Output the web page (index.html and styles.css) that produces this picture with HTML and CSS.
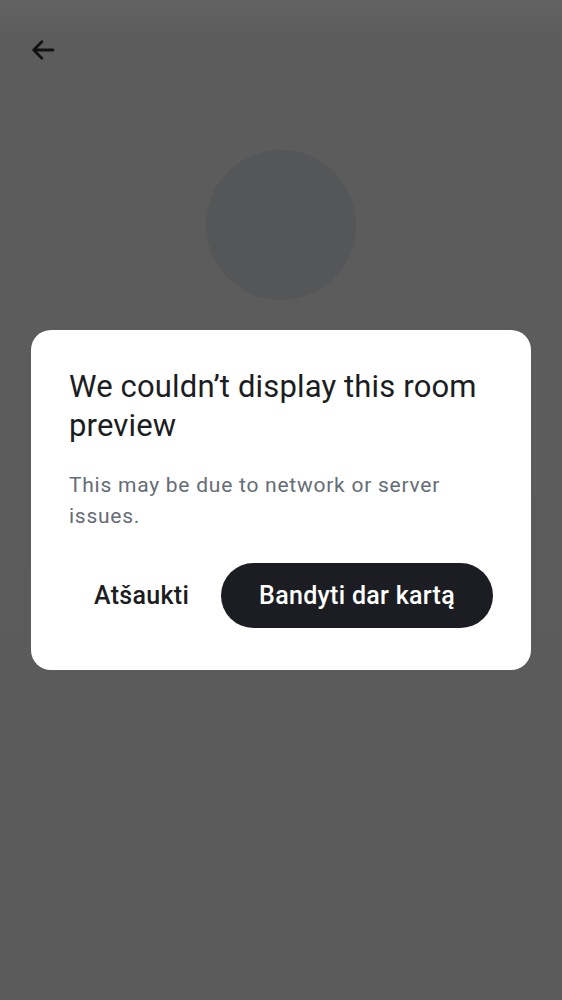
FILE: index.html
```html
<!DOCTYPE html>
<html lang="en">
<head>
<meta charset="utf-8">
<title>Room preview</title>
<link rel="stylesheet" href="styles.css">
</head>
<body>
<div class="screen">
  <header class="topbar">
    <button class="back" aria-label="Back">
      <svg width="28" height="28" viewBox="0 0 24 24"><path d="M20.5 12H4.5M11 5l-7 7 7 7" fill="none" stroke="#111214" stroke-width="2.4" stroke-linecap="round" stroke-linejoin="round"/></svg>
    </button>
  </header>
  <div class="avatar"></div>
</div>
<div class="overlay">
  <div class="dialog" role="dialog">
    <h1 class="title">We couldn’t display this room preview</h1>
    <p class="body">This may be due to network or server issues.</p>
    <div class="actions">
      <button class="btn text">Atšaukti</button>
      <button class="btn primary">Bandyti dar kartą</button>
    </div>
  </div>
</div>
</body>
</html>
```
FILE: styles.css
```css
html, body {
  margin: 0;
  padding: 0;
}
body {
  width: 562px;
  height: 1000px;
  overflow: hidden;
  background: linear-gradient(to bottom, #626262 0px, #5c5c5c 40px, #5b5b5b 1000px);
  font-family: Roboto, "Noto Sans", "Liberation Sans", sans-serif;
}
.screen {
  display: flex;
  flex-direction: column;
  align-items: center;
}
.topbar {
  align-self: stretch;
  height: 100px;
  display: flex;
  align-items: flex-start;
  padding: 36px 0 0 29px;
  box-sizing: border-box;
}
.back {
  background: none;
  border: 0;
  padding: 0;
  width: 28px;
  height: 28px;
  display: flex;
}
.avatar {
  margin-top: 50px;
  width: 150px;
  height: 150px;
  border-radius: 50%;
  background: #555657;
}
.overlay {
  position: fixed;
  inset: 0;
  display: flex;
  align-items: center;
  justify-content: center;
}
.dialog {
  width: 500px;
  box-sizing: border-box;
  background: #ffffff;
  border-radius: 20px;
  padding: 37px 38px 42px 38px;
}
.title {
  margin: 0;
  font-size: 31px;
  line-height: 39px;
  font-weight: 400;
  color: #1b1d22;
  letter-spacing: 0.15px;
}
.body {
  margin: 25px 0 0;
  font-size: 21px;
  line-height: 31px;
  color: #656c76;
  letter-spacing: 0.75px;
}
.actions {
  margin-top: 31px;
  display: flex;
  justify-content: flex-end;
  gap: 8px;
}
.btn {
  font-family: inherit;
  font-size: 25px;
  font-weight: 500;
  letter-spacing: 0.3px;
  height: 65px;
  border: 0;
  border-radius: 33px;
  padding: 0 24px;
  cursor: pointer;
}
.btn.text {
  background: transparent;
  color: #1b1d22;
}
.btn.primary {
  background: #1b1d22;
  color: #ffffff;
  padding: 0 38px;
}
```
